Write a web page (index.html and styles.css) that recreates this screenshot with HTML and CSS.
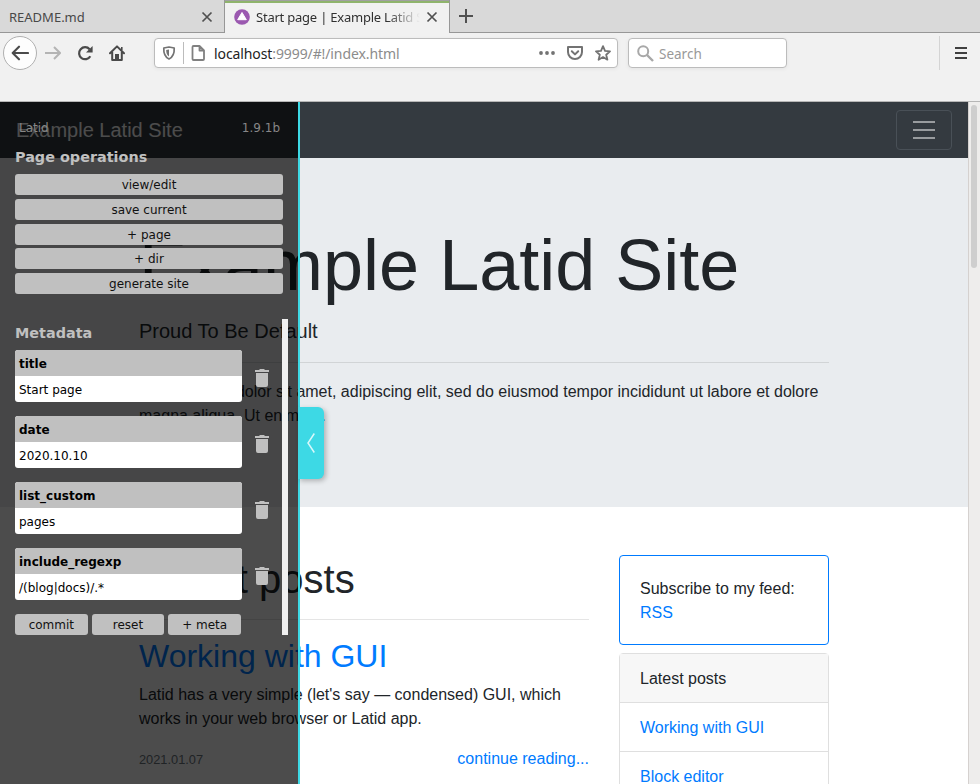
FILE: index.html
```
<!DOCTYPE html>
<html lang="en">
<head>
<meta charset="utf-8">
<title>Start page | Example Latid Site</title>
<link rel="stylesheet" href="styles.css">
</head>
<body>
<div class="browser">
  <div class="tabs">
    <div class="tab"><span class="tab-title">README.md</span>
      <svg class="close" width="12" height="12" viewBox="0 0 12 12"><path d="M1.5 1.5l9 9M10.5 1.5l-9 9"/></svg></div>
    <div class="tab active">
      <svg class="favicon" width="16" height="16" viewBox="0 0 16 16"><circle cx="8" cy="8" r="7.8" fill="#9b59b0"/><path d="M8 3.5L12.3 10.7H3.7z" fill="#fff" stroke="#fff" stroke-linejoin="round"/></svg>
      <span class="tab-title fade">Start page | Example Latid Site</span>
      <svg class="close" width="12" height="12" viewBox="0 0 12 12"><path d="M1.5 1.5l9 9M10.5 1.5l-9 9"/></svg></div>
    <div class="tab-rest"><svg width="14" height="14" viewBox="0 0 14 14"><path d="M7 0v14M0 7h14"/></svg></div>
  </div>
  <div class="toolbar">
    <div class="back"><svg width="18" height="16" viewBox="0 0 18 16"><path d="M17 8H2M8 1.7L1.7 8 8 14.3"/></svg></div>
    <svg class="forward" width="16" height="16" viewBox="0 0 16 16"><path d="M0 8h15M9 2l6 6-6 6"/></svg>
    <svg class="reload" width="16" height="16" viewBox="0 0 16 16"><path d="M13.3 11.2A6 6 0 1 1 12.6 4.2" fill="none" stroke="#4a4a4a" stroke-width="2.2"/><path d="M15.6 1v6.6H9z" fill="#4a4a4a"/></svg>
    <svg class="home" width="16" height="16" viewBox="0 0 16 16"><path d="M1 8.2L8 1.4l7 6.8M3.2 7v8h9.6V7" fill="none" stroke="#4a4a4a" stroke-width="2" stroke-linejoin="round" stroke-linecap="round"/><path d="M6 15V9h4v6z" fill="#4a4a4a"/><path d="M12 2h1.6v3H12z" fill="#4a4a4a"/></svg>
    <div class="urlbar">
      <svg width="14" height="16" viewBox="0 0 14 16"><path d="M7 2l5.2 1c.3 5-.7 8.800-5.200 11C2.500 11.800 1.500 8 1.800 3z" fill="none" stroke="#737373" stroke-width="1.700" stroke-linejoin="round"/><path d="M7 4.400v7C4.700 10 4.200 7.500 4.200 4.900z" fill="#737373"/></svg>
      <i class="url-sep"></i>
      <svg class="doc" width="14" height="16" viewBox="0 0 14 16"><path d="M2.500 1h6L13 5.500v8.500c0 .6-.4 1-1 1H2.500c-.6 0-1-.4-1-1V2c0-.6.400-1 1-1zM8.500 1v4.500H13" fill="none" stroke="#808080" stroke-width="1.800" stroke-linejoin="round"/></svg>
      <span class="url"><b>localhost</b>:9999/#!/index.html</span>
      <svg width="16" height="16" viewBox="0 0 16 16" fill="#737373"><circle cx="2" cy="8" r="1.900"/><circle cx="8" cy="8" r="1.900"/><circle cx="14" cy="8" r="1.900"/></svg>
      <svg width="16" height="16" viewBox="0 0 16 16" fill="none" stroke="#737373" stroke-width="2" stroke-linecap="round" stroke-linejoin="round"><path d="M1 2h14v5a7 7 0 0 1-14 0zM4.800 6.300L8 9.400l3.200-3.100"/></svg>
      <svg width="16" height="16" viewBox="0 0 16 16"><path d="M8 1.200l2 4.700 5 .5-3.800 3.300 1.200 5L8 12.100l-4.400 2.600 1.200-5L1 6.400l5-.5z" fill="none" stroke="#737373" stroke-width="1.800" stroke-linejoin="round"/></svg>
    </div>
    <div class="search"><svg width="17" height="17" viewBox="0 0 17 17" fill="none" stroke="#a8a8a8"><circle cx="6.200" cy="6.200" r="5" stroke-width="2"/><path d="M10 10l6 6" stroke-width="2.400"/></svg><span>Search</span></div>
    <div class="menu"><svg width="12" height="12" viewBox="0 0 12 12"><path d="M0 1h12M0 6h12M0 11h12"/></svg></div>
  </div>
</div>
<div class="viewport">
  <div class="page">
    <nav class="navbar"><span class="brand">Example Latid Site</span>
      <span class="toggler"><svg width="30" height="30" viewBox="0 0 30 30"><path d="M4 7h22M4 15h22M4 23h22"/></svg></span></nav>
    <header class="jumbotron"><div class="container">
      <h1>Example Latid Site</h1>
      <p class="lead">Proud To Be Default</p>
      <hr>
      <p class="text">Lorem ipsum dolor sit amet, adipiscing elit, sed do eiusmod tempor incididunt ut labore et dolore magna aliqua. Ut enim <a>ad.</a></p>
    </div></header>
    <div class="container row">
      <main>
        <h2>Latest posts</h2>
        <hr>
        <h3><a>Working with GUI</a></h3>
        <p>Latid has a very simple (let's say — condensed) GUI, which works in your web browser or Latid app.</p>
        <div class="post-foot"><small>2021.01.07</small><a>continue reading...</a></div>
      </main>
      <aside>
        <div class="card">Subscribe to my feed: <a>RSS</a></div>
        <ul class="list"><li class="head">Latest posts</li><li><a>Working with GUI</a></li><li><a>Block editor</a></li></ul>
      </aside>
    </div>
  </div>
  <div class="scrollbar"><i></i></div>
  <section class="panel">
    <div class="panel-top"><span>Latid</span><span>1.9.1b</span></div>
    <h4>Page operations</h4>
    <div class="ops"><button>view/edit</button><button>save current</button><button>+ page</button><button>+ dir</button><button>generate site</button></div>
    <div class="meta">
      <h4>Metadata</h4>
      <div class="field"><div class="box"><b>title</b><span>Start page</span></div><svg class="trash" width="14" height="18" viewBox="0 0 14 18"><path d="M0 1h4l1-1h4l1 1h4v2H0zM1 4h12v12a2 2 0 0 1-2 2H3a2 2 0 0 1-2-2z"/></svg></div>
      <div class="field"><div class="box"><b>date</b><span>2020.10.10</span></div><svg class="trash" width="14" height="18" viewBox="0 0 14 18"><path d="M0 1h4l1-1h4l1 1h4v2H0zM1 4h12v12a2 2 0 0 1-2 2H3a2 2 0 0 1-2-2z"/></svg></div>
      <div class="field"><div class="box"><b>list_custom</b><span>pages</span></div><svg class="trash" width="14" height="18" viewBox="0 0 14 18"><path d="M0 1h4l1-1h4l1 1h4v2H0zM1 4h12v12a2 2 0 0 1-2 2H3a2 2 0 0 1-2-2z"/></svg></div>
      <div class="field"><div class="box"><b>include_regexp</b><span>/(blog|docs)/.*</span></div><svg class="trash" width="14" height="18" viewBox="0 0 14 18"><path d="M0 1h4l1-1h4l1 1h4v2H0zM1 4h12v12a2 2 0 0 1-2 2H3a2 2 0 0 1-2-2z"/></svg></div>
      <div class="actions"><button>commit</button><button>reset</button><button>+ meta</button></div>
    </div>
    <div class="handle"><svg width="8" height="20" viewBox="0 0 8 20"><path d="M7.300 .5L1 10l6.300 9.500"/></svg></div>
  </section>
</div>
</body>
</html>
```
FILE: styles.css
```
* { box-sizing: border-box; }
body { margin: 0; width: 980px; height: 784px; overflow: hidden; background: #fff; font: 16px/1.5 "Liberation Sans", Arial, sans-serif; color: #212529; }
svg { display: block; flex: none; }
a { color: #007bff; }
h1, h2, h3, h4, p, ul { margin: 0; padding: 0; font-weight: 400; }

.browser { height: 102px; background: #f1f1f1; border-bottom: 1px solid #b6b6b6; font-family: "Noto Sans", sans-serif; }
.tabs { display: flex; height: 33px; font-size: 13px; color: #303030; }
.tab { display: flex; align-items: center; width: 224px; padding: 1px 11px 0 9px; background: #d9d9d9; border-bottom: 1px solid #979797; color: #484848; }
.tab.active { width: 226px; padding: 0 11px 0 9px; background: #f1f1f1; border: 1px solid #979797; border-top: 0; border-bottom: 0; box-shadow: inset 0 1px #a0a0a0, inset 0 3px #8fb46c; color: #303030; }
.tab-title { flex: 1; padding-top: 2px; overflow: hidden; white-space: nowrap; }
.fade { margin-right: 6px; letter-spacing: -.22px; -webkit-mask-image: linear-gradient(90deg, #000 80%, transparent); mask-image: linear-gradient(90deg, #000 80%, transparent); }
.favicon { margin-right: 6px; }
.close { stroke: #505050; stroke-width: 1.7; fill: none; }
.tab-rest { flex: 1; padding: 9px 9px; background: #d9d9d9; border-bottom: 1px solid #979797; }
.tab-rest svg { stroke: #505050; stroke-width: 2; }
.toolbar { display: flex; align-items: center; height: 40px; padding-left: 3px; }
.back { display: grid; place-items: center; width: 34px; height: 34px; border: 1px solid #b0b0b0; border-radius: 50%; background: #fdfdfd; }
.back svg { fill: none; stroke: #4a4a4a; stroke-width: 2.1; stroke-linecap: round; stroke-linejoin: round; }
.forward { margin-left: 8px; fill: none; stroke: #b4b4b4; stroke-width: 2; }
.reload { margin-left: 16px; }
.home { margin-left: 16px; }
.urlbar, .search { display: flex; align-items: center; height: 30px; border: 1px solid #bcbcbc; border-radius: 4px; background: #fff; box-shadow: 0 1px 4px rgba(0,0,0,.06); font-size: 14px; }
.urlbar { width: 464px; margin-left: 29px; padding: 0 6px 0 7px; gap: 12px; }
.url-sep { width: 1px; height: 22px; margin-left: -5px; background: #bcbcbc; }
.doc { margin-left: -5px; }
.url { flex: 1; margin-left: -3px; white-space: nowrap; letter-spacing: -.1px; color: #8c8c8c; }
.url b { font-weight: 400; color: #222; }
.search { width: 159px; margin-left: 10px; padding-left: 8px; color: #999; font-size: 13.5px; }
.search span { margin-left: 5px; padding-top: 2px; }
.menu { display: flex; align-items: center; height: 34px; margin-left: 152px; padding-left: 15px; border-left: 1px solid #d4d4d4; }
.menu svg { stroke: #404040; stroke-width: 2; }

.viewport { position: relative; display: flex; height: 682px; overflow: hidden; }
.page { width: 968px; }
.scrollbar { width: 12px; padding: 3px 2px; background: #eeedec; border-left: 1px solid #d5d1cf; }
.scrollbar i { display: block; width: 6px; height: 163px; border-radius: 3px; background: #cecece; }
.navbar { display: flex; align-items: center; justify-content: space-between; height: 56px; padding: 0 16px; background: #343a40; }
.brand { font-size: 20px; color: #fff; }
.toggler { padding: 4px 12px; border: 1px solid #495057; border-radius: 4px; }
.toggler svg { stroke: #999c9f; stroke-width: 2; }
.jumbotron { height: 349px; padding: 64px 0; background: #e9ecef; }
.container { width: 720px; margin: 0 auto; padding: 0 15px; }
.jumbotron h1 { margin-bottom: 8px; font-size: 72px; line-height: 1.2; }
.lead { font-size: 20px; }
.text { padding-top: 1px; }
hr { margin: 16px 0; border: 0; border-top: 1px solid rgba(0,0,0,.1); }
.row { display: flex; gap: 30px; padding-top: 48px; }
main { width: 450px; }
aside { width: 210px; }
h2 { font-size: 40px; line-height: 1.2; }
h3 { margin-bottom: 8px; padding-top: 1px; font-size: 32px; line-height: 1.2; }
.post-foot { display: flex; justify-content: space-between; align-items: baseline; margin-top: 16px; }
small { font-size: 12.8px; color: #6c757d; }
.card { margin-bottom: 8px; padding: 21px 20px 19px; border: 1px solid #007bff; border-radius: 4px; }
.list { list-style: none; border: 1px solid #dfdfdf; border-radius: 4px; }
.list li { padding: 13px 20px 11px; border-bottom: 1px solid #dfdfdf; }
.list .head { background: #f7f7f7; }

.panel { position: absolute; inset: 0 auto 0 0; width: 300px; padding: 16px 15px 0; background: rgba(0,0,0,.7); border-right: 2px solid #3dd9e5; font: 12px/20px "DejaVu Sans", sans-serif; color: #c0c0c0; }
.panel-top { display: flex; justify-content: space-between; padding: 0 3px 0 4px; color: #878787; }
.panel h4 { height: 36px; padding-top: 8px; font-size: 14.4px; line-height: 22px; font-weight: 700; }
.ops { display: flex; flex-direction: column; gap: 3.75px; }
button { height: 21px; padding: 1px 0 0; border: 0; border-radius: 3px; background: #c0c0c0; color: #111; font: 12px/21px "DejaVu Sans", sans-serif; }
.meta { width: 273px; height: 316px; margin-top: 25px; border-right: 6px solid #f0f0f0; }
.meta h4 { height: 31px; padding-top: 3px; }
.field { display: flex; align-items: center; gap: 13px; margin-bottom: 14px; }
.box { width: 227px; border-radius: 3px; overflow: hidden; background: #fff; color: #000; }
.box b, .box span { display: block; height: 26px; padding: 1px 0 0 4px; line-height: 27px; }
.box b { background: #c0c0c0; }
.trash { fill: #c0c0c0; margin-top: 4px; }
.actions { display: flex; width: 226px; gap: 4px; }
.actions button { flex: 1; }
.handle { position: absolute; left: 298px; top: 305px; display: grid; place-items: center; width: 26px; height: 72px; border-radius: 0 6px 6px 0; background: #3dd9e5; box-shadow: 2px 2px 5px rgba(0,0,0,.25); }
.handle svg { fill: none; stroke: #d8f8fa; stroke-width: 1.5; }
```
